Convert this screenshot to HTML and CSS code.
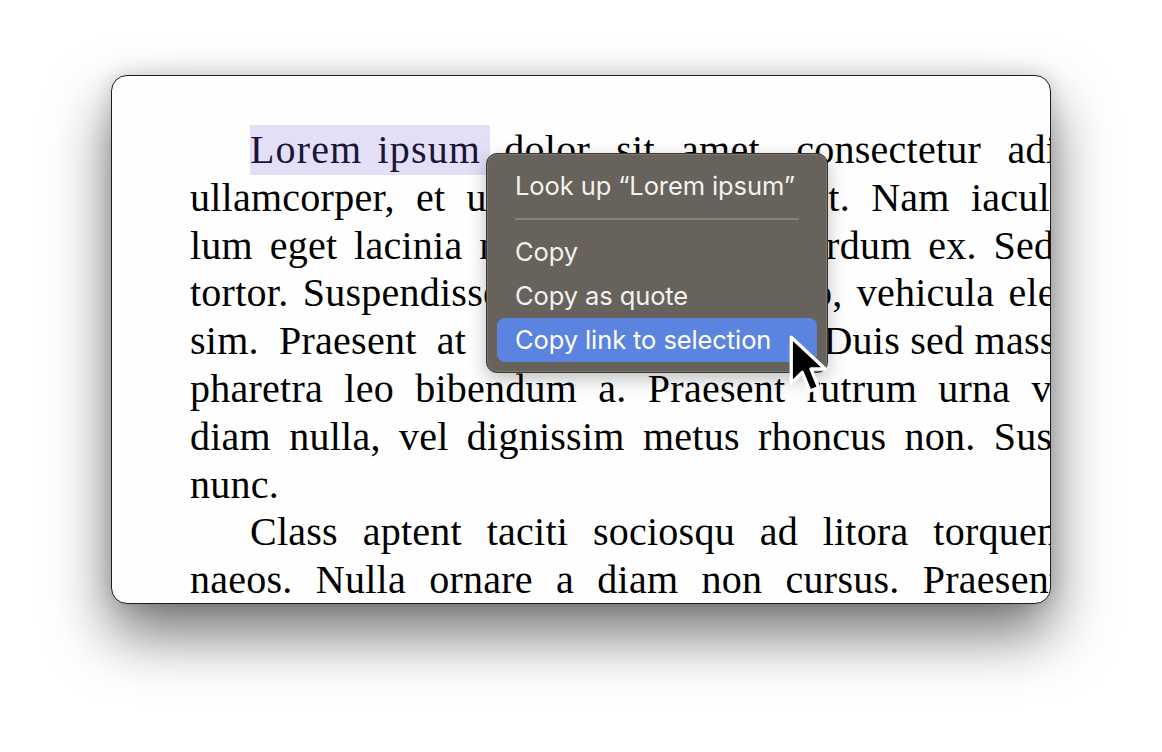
FILE: index.html
```html
<!DOCTYPE html>
<html>
<head>
<meta charset="utf-8">
<link rel="stylesheet" href="styles.css">
</head>
<body>
<div class="stage">
  <div class="window">
    <div class="page">
      <div class="line indent"><span class="sel">Lorem ipsum</span> <span class="l1">dolor sit amet, consectetur adipiscing elit.</span></div>
      <div class="line l2">ullamcorper, et ultrices a nisl blandit. Nam iaculis</div>
      <div class="line l3">lum eget lacinia nisi, vel semper interdum ex. Sed</div>
      <div class="line">tortor. Suspendisse potenti. In eu justo, vehicula eleifend</div>
      <div class="line"><span class="l5">sim. Praesent at </span>mattis nibh dictum. <span class="tight">Duis sed massa</span></div>
      <div class="line l6">pharetra leo bibendum a. Praesent rutrum urna vel</div>
      <div class="line l7">diam nulla, vel dignissim metus rhoncus non. Suspendisse</div>
      <div class="line">nunc.</div>
      <div class="line indent l9">Class aptent taciti sociosqu ad litora torquent per</div>
      <div class="line l10">naeos. Nulla ornare a diam non cursus. Praesent</div>
    </div>
    <div class="menu">
      <div class="item">Look up “Lorem ipsum”</div>
      <div class="sep"></div>
      <div class="item">Copy</div>
      <div class="item">Copy as quote</div>
      <div class="item active">Copy link to selection</div>
    </div>
    <svg class="cursor" width="44" height="68" viewBox="0 0 40 62">
      <path d="M2 2 L2 44 L12 34 L19 51 L27 48 L20 31 L33 31 Z" fill="#000" stroke="#fff" stroke-width="3" stroke-linejoin="round"/>
    </svg>
  </div>
</div>
</body>
</html>
```
FILE: styles.css
```css
html, body {
  margin: 0;
  padding: 0;
  background: #ffffff;
  min-height: 752px;
}
.stage {
  padding: 75px 0 0 111px;
  min-height: 752px;
  box-sizing: border-box;
}
.window {
  position: relative;
  width: 938px;
  height: 527px;
  border: 1px solid #1e1e1e;
  border-radius: 16px;
  background: #fefefe;
  overflow: hidden;
  box-shadow: 0 30px 60px rgba(0, 0, 0, 0.55), 0 0 20px rgba(0, 0, 0, 0.14);
}
.page {
  padding: 50px 0 0 78px;
  font-family: "Liberation Serif", "Times New Roman", serif;
  font-size: 40px;
  line-height: 47.8px;
  letter-spacing: 0.25px;
  color: #000;
}
.line {
  white-space: nowrap;
  word-spacing: 4px;
}
.indent {
  padding-left: 60px;
}
.sel {
  background: #e2dff6;
  color: #1b1636;
  padding: 2px 9px 3px 0;
  letter-spacing: 1.15px;
}
.l1 { word-spacing: 16px; }
.l2 { word-spacing: 11px; }
.l3 { word-spacing: 6.5px; }
.l5 { word-spacing: 10px; }
.tight { word-spacing: 0; }
.l6 { word-spacing: 11px; }
.l7 { word-spacing: 8px; }
.l9 { word-spacing: 14.5px; }
.l10 { word-spacing: 13px; }
.menu {
  position: absolute;
  left: 374px;
  top: 77px;
  width: 320px;
  padding: 10px 10px;
  background: #67625c;
  border: 1px solid #3a3733;
  box-shadow: inset 0 0 0 1px rgba(255, 255, 255, 0.12), 0 6px 18px rgba(0, 0, 0, 0.25);
  border-radius: 11px;
  font-family: Inter, "Noto Sans", sans-serif;
  font-size: 25.5px;
  color: #f3f1ee;
}
.item {
  height: 44px;
  line-height: 44px;
  padding-left: 18px;
  border-radius: 8px;
  letter-spacing: -0.1px;
}
.item.active {
  background: #5a84e0;
  color: #ffffff;
}
.sep {
  height: 22px;
  display: flex;
  align-items: center;
  padding: 0 18px 0 18px;
}
.sep::before {
  content: "";
  flex: 1;
  height: 2px;
  background: #85807a;
}
.cursor {
  position: absolute;
  left: 677px;
  top: 259px;
}
```
